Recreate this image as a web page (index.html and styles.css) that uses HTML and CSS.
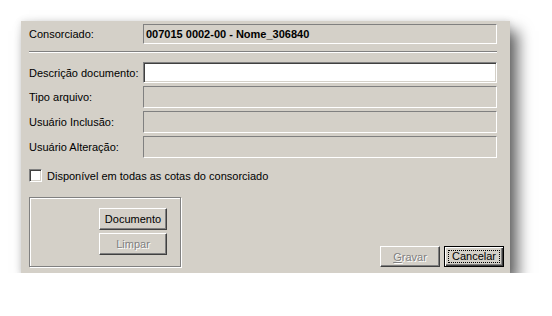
FILE: index.html
```html
<!DOCTYPE html>
<html lang="pt">

<head>
    <meta charset="UTF-8">
    <meta name="viewport" content="width=device-width, initial-scale=1.0">
    <title>Documento do consorciado</title>
    <link rel="stylesheet" href="styles.css">
</head>

<body>
    <div class="dialog">
        <div class="row row-top">
            <label class="label">Consorciado:</label>
            <div class="field field-bold">007015 0002-00 - Nome_306840</div>
        </div>

        <div class="separator"></div>

        <div class="row row-desc">
            <label class="label">Descrição documento:</label>
            <div class="field field-edit"></div>
        </div>
        <div class="row">
            <label class="label">Tipo arquivo:</label>
            <div class="field"></div>
        </div>
        <div class="row">
            <label class="label">Usuário Inclusão:</label>
            <div class="field"></div>
        </div>
        <div class="row">
            <label class="label">Usuário Alteração:</label>
            <div class="field"></div>
        </div>

        <div class="check-row">
            <span class="checkbox"></span>
            <span>Disponível em todas as cotas do consorciado</span>
        </div>

        <div class="bottom">
            <div class="group">
                <button class="btn btn-doc">Documento</button>
                <button class="btn btn-doc" disabled>Limpar</button>
            </div>
            <div class="actions">
                <button class="btn btn-action" disabled><u>G</u>ravar</button>
                <button class="btn btn-action btn-default"><span class="focus">Cancelar</span></button>
            </div>
        </div>
    </div>
</body>

</html>
```

FILE: styles.css
```css
body {
    margin: 0;
    padding: 21px 0 0 21px;
    background: #fff;
    font-family: "Liberation Sans", Arial, sans-serif;
    font-size: 11px;
    color: #000;
}

.dialog {
    width: 489px;
    height: 252px;
    box-sizing: border-box;
    padding: 3px 13px 6px 8px;
    background: #d4d0c8;
    display: flex;
    flex-direction: column;
    box-shadow: 8px 10px 14px rgba(0, 0, 0, 0.6), 0 0 7px rgba(0, 0, 0, 0.12);
}

.row {
    display: flex;
    align-items: center;
    height: 22px;
    margin-top: 3px;
}

.row-top {
    height: 20px;
    margin-top: 0;
}

.row-desc {
    height: 21px;
    margin-top: 0;
}

.label {
    width: 114px;
    flex-shrink: 0;
    white-space: nowrap;
}

.field {
    flex: 1;
    height: 100%;
    box-sizing: border-box;
    border: 1px solid;
    border-color: #808080 #fff #fff #808080;
    padding: 0 2px;
    display: flex;
    align-items: center;
}

.field-bold {
    font-weight: bold;
}

.field-edit {
    background: #fff;
    box-shadow: inset 1px 1px #404040, inset -1px -1px #d4d0c8;
}

.separator {
    height: 0;
    border-top: 1px solid #808080;
    border-bottom: 1px solid #fff;
    margin: 7px 0 9px;
}

.check-row {
    display: flex;
    align-items: center;
    gap: 5px;
    margin-top: 11px;
    height: 13px;
}

.checkbox {
    width: 13px;
    height: 13px;
    box-sizing: border-box;
    background: #fff;
    border: 1px solid;
    border-color: #808080 #fff #fff #808080;
    box-shadow: inset 1px 1px #404040, inset -1px -1px #d4d0c8;
}

.bottom {
    flex: 1;
    display: flex;
    justify-content: space-between;
    align-items: flex-end;
    margin-right: -7px;
}

.group {
    width: 152px;
    height: 70px;
    box-sizing: border-box;
    border: 1px solid #808080;
    box-shadow: inset 1px 1px #fff, 1px 1px #fff;
    display: flex;
    flex-direction: column;
    align-items: flex-end;
    gap: 3px;
    padding: 10px 13px 0 0;
}

.btn {
    font-family: inherit;
    font-size: 11px;
    color: #000;
    background: #d4d0c8;
    border: 1px solid;
    border-color: #fff #404040 #404040 #fff;
    box-shadow: inset -1px -1px #808080;
    padding: 0;
    margin: 0;
}

.btn:disabled {
    color: #808080;
    text-shadow: 1px 1px #fff;
}

.btn-doc {
    width: 68px;
    height: 22px;
}

.actions {
    display: flex;
    gap: 4px;
}

.btn-action {
    width: 60px;
    height: 21px;
}

.btn-default {
    border: 1px solid #000;
    box-shadow: inset 1px 1px #fff, inset -1px -1px #404040, inset -2px -2px #808080;
    padding: 3px;
}

.focus {
    display: block;
    height: 100%;
    box-sizing: border-box;
    border: 1px dotted #000;
    line-height: 11px;
}
```
